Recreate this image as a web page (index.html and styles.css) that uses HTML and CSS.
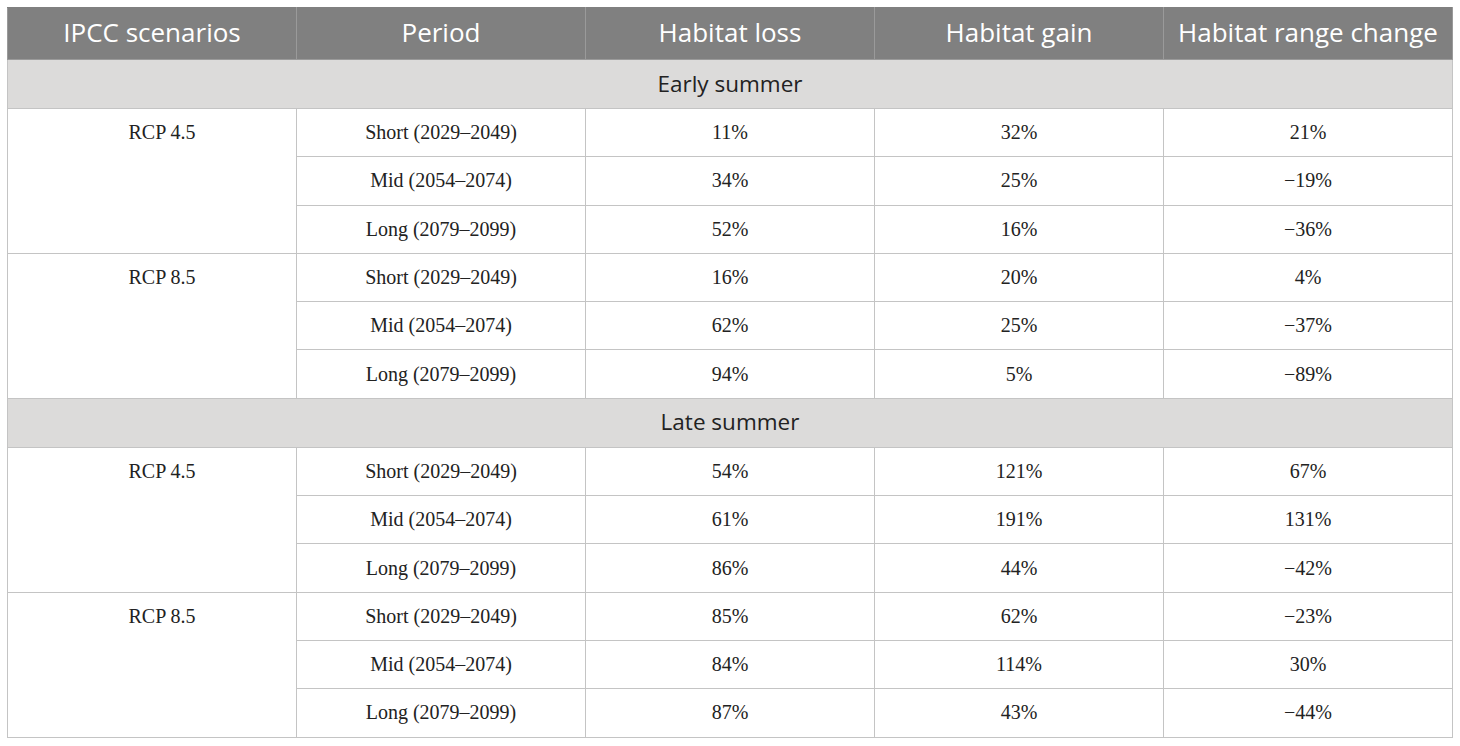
FILE: index.html
```html
<!doctype html>
<html>
<head>
    <title>Habitat change</title>
    <link rel="stylesheet" href="styles.css">
</head>
<body>
    <table class="habitat">
        <thead>
            <tr class="habitat__head">
                <th>IPCC scenarios</th>
                <th>Period</th>
                <th>Habitat loss</th>
                <th>Habitat gain</th>
                <th>Habitat range change</th>
            </tr>
        </thead>
        <tbody>
            <tr class="habitat__section"><td colspan="5">Early summer</td></tr>
            <tr>
                <td rowspan="3" class="habitat__scenario">RCP 4.5</td>
                <td>Short (2029–2049)</td><td>11%</td><td>32%</td><td>21%</td>
            </tr>
            <tr><td>Mid (2054–2074)</td><td>34%</td><td>25%</td><td>−19%</td></tr>
            <tr><td>Long (2079–2099)</td><td>52%</td><td>16%</td><td>−36%</td></tr>
            <tr>
                <td rowspan="3" class="habitat__scenario">RCP 8.5</td>
                <td>Short (2029–2049)</td><td>16%</td><td>20%</td><td>4%</td>
            </tr>
            <tr><td>Mid (2054–2074)</td><td>62%</td><td>25%</td><td>−37%</td></tr>
            <tr><td>Long (2079–2099)</td><td>94%</td><td>5%</td><td>−89%</td></tr>

            <tr class="habitat__section"><td colspan="5">Late summer</td></tr>
            <tr>
                <td rowspan="3" class="habitat__scenario">RCP 4.5</td>
                <td>Short (2029–2049)</td><td>54%</td><td>121%</td><td>67%</td>
            </tr>
            <tr><td>Mid (2054–2074)</td><td>61%</td><td>191%</td><td>131%</td></tr>
            <tr><td>Long (2079–2099)</td><td>86%</td><td>44%</td><td>−42%</td></tr>
            <tr>
                <td rowspan="3" class="habitat__scenario">RCP 8.5</td>
                <td>Short (2029–2049)</td><td>85%</td><td>62%</td><td>−23%</td>
            </tr>
            <tr><td>Mid (2054–2074)</td><td>84%</td><td>114%</td><td>30%</td></tr>
            <tr><td>Long (2079–2099)</td><td>87%</td><td>43%</td><td>−44%</td></tr>
        </tbody>
    </table>
</body>
</html>
```

FILE: styles.css
```css
* {
    box-sizing: border-box;
}

body {
    margin: 7px;
    background: #fff;
}

.habitat {
    width: 1446px;
    border-collapse: collapse;
    table-layout: fixed;
    font-family: "Liberation Serif", serif;
    font-size: 20px;
    color: #222;
}

.habitat td,
.habitat th {
    border: 1px solid #c4c4c4;
    text-align: center;
    padding: 0;
}

.habitat td {
    height: 48.3px;
}

.habitat__head th {
    height: 52px;
    padding-bottom: 4px;
    background: #808080;
    color: #fff;
    font-family: "Open Sans", sans-serif;
    font-weight: normal;
    font-size: 26px;
    border-color: #9a9a9a;
    border-top-color: #808080;
}

.habitat__section td {
    height: 49px;
    padding-bottom: 2px;
    background: #dcdbda;
    font-family: "Open Sans", sans-serif;
    font-size: 22.5px;
    color: #222;
}

.habitat__scenario {
    vertical-align: top;
    padding: 12px 0 0 20px !important;
}
```
